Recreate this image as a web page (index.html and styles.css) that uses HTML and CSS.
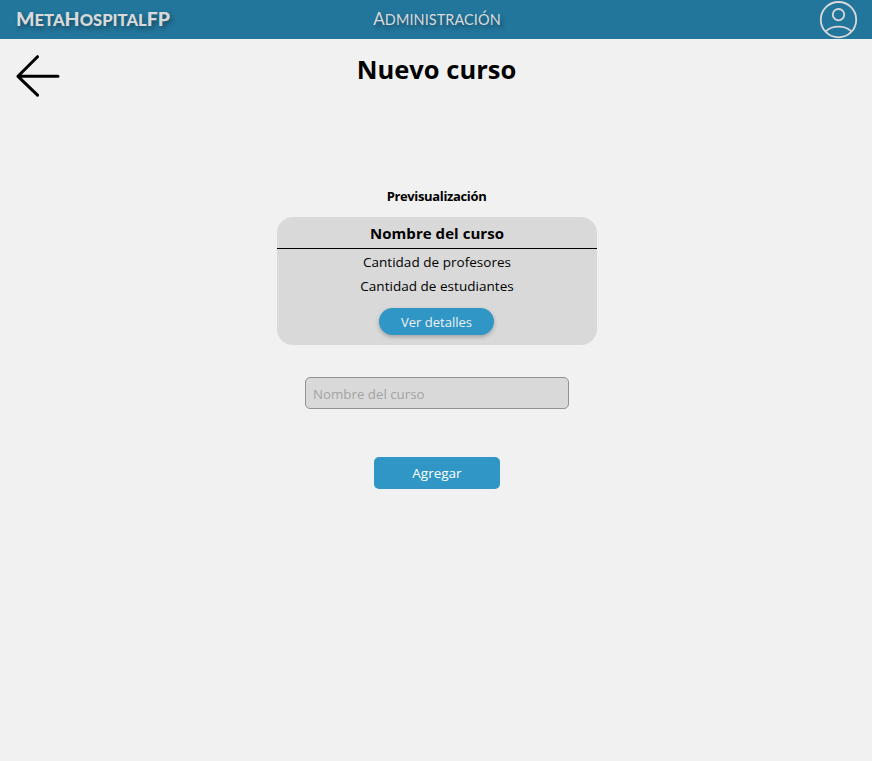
FILE: index.html
```html
<!DOCTYPE html>
<html lang="es">
<head>
<meta charset="utf-8">
<title>MetaHospitalFP</title>
<link rel="stylesheet" href="styles.css">
</head>
<body>
<header class="topbar">
  <div class="brand">M<span class="sc">eta</span>H<span class="sc">ospital</span>FP</div>
  <div class="section">A<span class="sc">dministración</span></div>
  <svg class="user" viewBox="0 0 38 38" fill="none" stroke="currentColor" stroke-width="1.8">
    <circle cx="18.500" cy="18.700" r="17.700"/>
    <circle cx="18.500" cy="13.700" r="5.700"/>
    <path d="M5.700 30.300C9 27.300 13.500 25.700 18.500 25.700S28 27.300 31.300 30.300"/>
  </svg>
</header>
<main>
  <div class="heading">
    <svg class="back" viewBox="0 0 44 42" fill="none" stroke="currentColor" stroke-width="3" stroke-linecap="round" stroke-linejoin="round">
      <path d="M21.500 1.700L2 21.300L21.500 40.200M2 21.300H42"/>
    </svg>
    <h1>Nuevo curso</h1>
  </div>
  <h2>Previsualización</h2>
  <section class="card">
    <h3>Nombre del curso</h3>
    <p>Cantidad de profesores</p>
    <p>Cantidad de estudiantes</p>
    <button class="details">Ver detalles</button>
  </section>
  <input type="text" placeholder="Nombre del curso">
  <button class="add">Agregar</button>
</main>
</body>
</html>
```
FILE: styles.css
```css
* { box-sizing: border-box; }
body {
  margin: 0;
  min-height: 100vh;
  background: #f1f1f1;
  color: #000;
  font-family: "Open Sans", "Noto Sans", sans-serif;
}
h1, h2, h3, p { margin: 0; }
.topbar {
  display: grid;
  grid-template-columns: 1fr auto 1fr;
  align-items: center;
  height: 39px;
  padding: 0 14px 0 16px;
  background: #22759b;
  color: #d9d9d9;
  font-family: Lato, sans-serif;
  text-shadow: 2px 3px 4px rgba(0, 0, 0, .35);
}
.sc { font-size: .85em; text-transform: uppercase; }
.brand { font-size: 19.500px; font-weight: 900; letter-spacing: 0; line-height: 38px; }
.section { font-size: 17px; letter-spacing: .1px; line-height: 38px; }
.user { justify-self: end; width: 38px; height: 38px; }
main {
  display: flex;
  flex-direction: column;
  align-items: center;
}
.heading {
  display: grid;
  grid-template-columns: 1fr auto 1fr;
  width: 100%;
  height: 62px;
  padding: 0 15px 0 16px;
}
.back { width: 44px; height: 42px; margin-top: 16px; }
h1 { font-size: 25.500px; line-height: 36px; font-weight: 700; margin-top: 12px; }
h2 { margin: 85px 0 0 1px; font-size: 13px; line-height: 20px; font-weight: 700; letter-spacing: -.35px; }
.card {
  display: flex;
  flex-direction: column;
  align-items: center;
  width: 320px;
  height: 128px;
  margin: 11px 0 0 2px;
  border-radius: 16px;
  background: #d9d9d9;
}
h3 {
  width: 100%;
  height: 32px;
  border-bottom: 1px solid #000;
  font-size: 15px;
  letter-spacing: .05px;
  line-height: 32px;
  text-align: center;
}
p { height: 24px; font-size: 13.500px; letter-spacing: .03px; line-height: 26px; }
button { border: 0; padding: 0; background: #2f96c5; color: #fff; font: 13px/27px "Open Sans", sans-serif; }
.details { width: 115px; height: 27px; margin: 11px 1px 0 0; padding-top: 1px; border-radius: 14px; box-shadow: 0 2px 4px rgba(0, 0, 0, .25); color: #f1f1f1; }
input {
  width: 264px;
  height: 32px;
  margin: 32px 0 0 2px;
  padding: 2px 7px 0;
  border: 1px solid #929292;
  border-radius: 5px;
  background: #d9d9d9;
  font: 13.300px "Open Sans", sans-serif;
}
input::placeholder { color: #a3a3a3; }
.add { width: 126px; height: 32px; margin: 48px 0 0 2px; border-radius: 5px; font-size: 13.500px; line-height: 32px; }
```
